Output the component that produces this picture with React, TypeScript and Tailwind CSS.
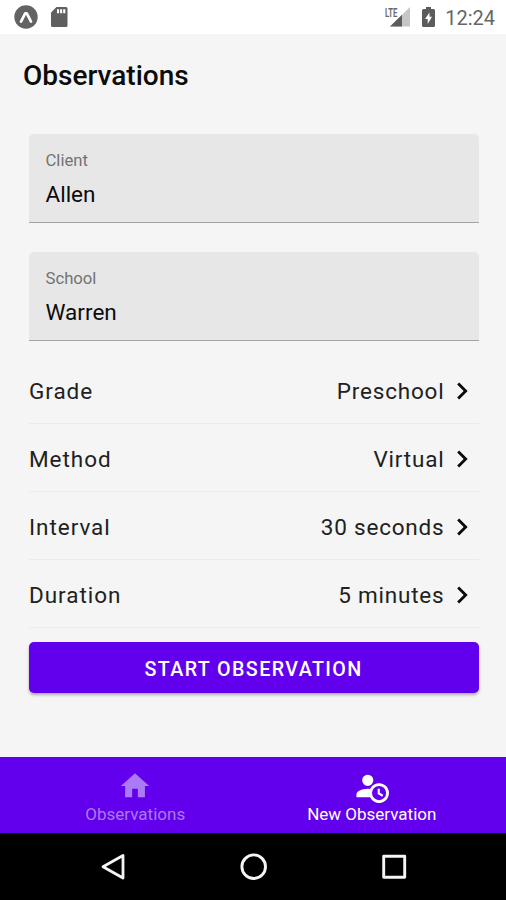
interface FieldProps {
  label: string;
  value: string;
}

const settings = [
  { label: "Grade", value: "Preschool" },
  { label: "Method", value: "Virtual" },
  { label: "Interval", value: "30 seconds" },
  { label: "Duration", value: "5 minutes" },
];

function StatusBar() {
  return (
    <div className="h-[34px] bg-white flex items-center justify-between pl-[14px] pr-[11px] text-[#666666]">
      <div className="flex items-center gap-[13px]">
        <svg width="24" height="24" viewBox="0 0 24 24" className="block">
          <circle cx="12" cy="12" r="11.7" fill="#636363" />
          <path d="M7 16.6L11.2 8.3h1.6L17 16.6" fill="none" stroke="#fff" strokeWidth="2.7" strokeLinejoin="round" strokeLinecap="round" />
        </svg>
        <svg width="17" height="20" viewBox="0 0 17 20" className="block">
          <path d="M5.5 0H15a1.5 1.5 0 0 1 1.5 1.5v17A1.5 1.5 0 0 1 15 20H1.5A1.5 1.5 0 0 1 0 18.5V5.5z" fill="#5f5f5f" />
          <path d="M6 2.3h2.1v4H6zM9.1 2.3h2.1v4H9.1zM12.2 2.3h2.1v4h-2.1z" fill="#fff" />
        </svg>
      </div>
      <div className="flex items-center">
        <div className="relative w-[26px] h-5 mr-3">
          <svg width="26" height="20" viewBox="0 0 26 20" className="block">
            <path d="M26 0V19.5H6z" fill="#c6c6c6" />
            <path d="M18 7.8V19.5H6z" fill="#5c5c5c" />
            <path d="M0 0h14v10.5H0z" fill="#fff" />
          </svg>
          <span className="absolute left-[1px] top-0 text-[12.5px] leading-[12px] font-semibold origin-left scale-x-[0.62]">
            LTE
          </span>
        </div>
        <svg width="13" height="20" viewBox="0 0 13 20" className="block mr-[10px]">
          <path d="M4 0h5v2h2.5A1.5 1.5 0 0 1 13 3.5v15a1.5 1.5 0 0 1-1.5 1.5h-10A1.5 1.5 0 0 1 0 18.5v-15A1.5 1.5 0 0 1 1.5 2H4z" fill="#5c5c5c" />
          <path d="M7.5 5.5v4.3H10L5.7 17v-5H3z" fill="#fff" />
        </svg>
        <span className="text-[20px] leading-[34px] pt-[2px]">12:24</span>
      </div>
    </div>
  );
}

function Field({ label, value }: FieldProps) {
  return (
    <div className="h-[89px] bg-[#e7e7e7] border-b border-[#a3a3a3] rounded-t-[5px] px-[17px] pt-4 mb-[29px]">
      <div className="text-[16.7px] leading-[22px] text-[#737373]">{label}</div>
      <div className="text-[22.5px] leading-[28px] mt-2 text-[#0c0c0c]">{value}</div>
    </div>
  );
}

function SettingRow({ label, value }: FieldProps) {
  return (
    <div className="h-[68px] pt-[5px] flex items-center justify-between border-b border-[#ebebeb] text-[22.5px] tracking-[0.8px] text-[#212121]">
      <span className="pl-[0.5px] tracking-[0.95px]">{label}</span>
      <span className="flex items-center">
        {value}
        <svg width="34" height="34" viewBox="0 0 24 24" className="block -mt-[3px]" fill="#0a0a0a">
          <path d="M8.59 16.58L13.17 12L8.59 7.41L10 6l6 6l-6 6z" />
        </svg>
      </span>
    </div>
  );
}

function TabBar() {
  return (
    <div className="h-[76px] bg-[#6200ee] flex pl-[17px] pr-4 text-[17px] leading-[20px] text-white">
      <div className="flex-1 flex flex-col items-center pt-3 text-[#ab7af6]">
        <svg width="34" height="34" viewBox="0 0 24 24" fill="currentColor">
          <path d="M10 20v-6h4v6h5v-8h3L12 3L2 12h3v8z" />
        </svg>
        <span className="mt-[1px]">Observations</span>
      </div>
      <div className="flex-1 flex flex-col items-center pt-3">
        <svg width="34" height="34" viewBox="0 0 24 24" fill="currentColor">
          <path d="M10.63 14.1A7 7 0 1 1 10.67 20H1v-2c.06-1.14.84-2.07 2.34-2.82S6.72 14.04 9 14c.57 0 1.11.05 1.63.1zM9 4a3.95 3.98 0 1 1 0 7.96A3.95 3.98 0 0 1 9 4zm8 18a5 5 0 1 0 0-10a5 5 0 0 0 0 10zm-1-8h1.5v2.82l2.44 1.41l-.75 1.3L16 17.69z" fillRule="evenodd" />
        </svg>
        <span className="mt-[1px]">New Observation</span>
      </div>
    </div>
  );
}

function NavigationBar() {
  return (
    <div className="h-[67px] bg-black flex items-center justify-center gap-[110px] pl-[2px]">
      <svg width="30" height="30" viewBox="0 0 30 30" fill="none" stroke="#f5f5f5" strokeWidth="2.8" strokeLinejoin="round">
        <path d="M24 3.5v22.5L4 14.7z" />
      </svg>
      <svg width="30" height="30" viewBox="0 0 30 30" fill="none" stroke="#f5f5f5" strokeWidth="2.9">
        <circle cx="14.7" cy="14.7" r="11.8" />
      </svg>
      <svg width="30" height="30" viewBox="0 0 30 30" fill="none" stroke="#f5f5f5" strokeWidth="2.9" strokeLinejoin="round">
        <path d="M4.7 4.2h21v21h-21z" />
      </svg>
    </div>
  );
}

export default function App() {
  return (
    <div className="w-[506px] h-[900px] flex flex-col overflow-hidden bg-[#f5f5f5] font-['Roboto',sans-serif]">
      <StatusBar />
      <h1 className="h-[100.4px] pl-[23px] pt-[24px] text-[28px] leading-[36px] font-medium text-[#0c0c0c]">
        Observations
      </h1>
      <main className="flex-1 pl-[28.5px] pr-[27.5px]">
        <Field label="Client" value="Allen" />
        <Field label="School" value="Warren" />
        <div className="-mt-[14.4px]">
          {settings.map((row) => (
            <SettingRow key={row.label} label={row.label} value={row.value} />
          ))}
        </div>
        <button className="mt-[14px] w-full h-[51px] pt-[5px] block rounded-[5px] bg-[#6200ee] text-white text-[19.7px] font-medium tracking-[1.4px] uppercase shadow-[0_2px_3px_rgba(0,0,0,0.3)]">
          Start Observation
        </button>
      </main>
      <TabBar />
      <NavigationBar />
    </div>
  );
}
